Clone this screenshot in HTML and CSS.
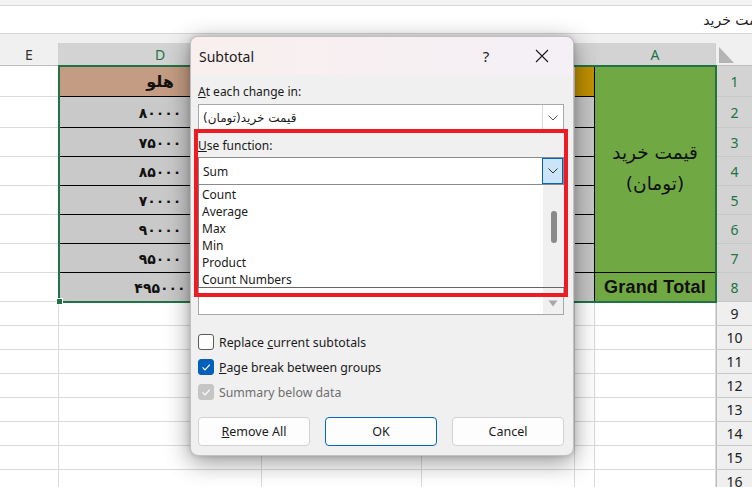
FILE: index.html
```html
<!DOCTYPE html>
<html>
<head>
<meta charset="utf-8">
<link rel="stylesheet" href="styles.css">
</head>
<body>
<div class="app">
  <div class="topstrip"></div>
  <div class="fbar"><span class="ftext">قیمت خرید</span></div>
  <div class="gap"></div>
  <div class="sheet">
    <div class="ch">E</div><div class="ch sel">D</div><div class="ch">C</div><div class="ch">B</div><div class="ch sel"></div><div class="ch sel">A</div>
    <div class="corner"><svg width="36" height="23" viewBox="0 0 36 23"><polygon points="3,4 3,20 18,20" fill="#b4b4b4"/></svg></div>

    <div class="c"></div><div class="c d head">هلو</div><div class="c"></div><div class="c"></div><div class="c b2 gold"></div>
    <div class="c amerge"><span>قیمت خرید</span><span>(تومان)</span></div><div class="rh sel">1</div>

    <div class="c"></div><div class="c d">۸۰۰۰۰</div><div class="c"></div><div class="c"></div><div class="c b2"></div><div class="rh sel">2</div>
    <div class="c"></div><div class="c d">۷۵۰۰۰</div><div class="c"></div><div class="c"></div><div class="c b2"></div><div class="rh sel">3</div>
    <div class="c"></div><div class="c d">۸۵۰۰۰</div><div class="c"></div><div class="c"></div><div class="c b2"></div><div class="rh sel">4</div>
    <div class="c"></div><div class="c d">۷۰۰۰۰</div><div class="c"></div><div class="c"></div><div class="c b2"></div><div class="rh sel">5</div>
    <div class="c"></div><div class="c d">۹۰۰۰۰</div><div class="c"></div><div class="c"></div><div class="c b2"></div><div class="rh sel">6</div>
    <div class="c"></div><div class="c d">۹۵۰۰۰</div><div class="c"></div><div class="c"></div><div class="c b2"></div><div class="rh sel">7</div>
    <div class="c"></div><div class="c d">۴۹۵۰۰۰</div><div class="c"></div><div class="c"></div><div class="c b2"></div><div class="c agt">Grand Total</div><div class="rh sel">8</div>

    <div class="c"></div><div class="c"></div><div class="c"></div><div class="c"></div><div class="c"></div><div class="c"></div><div class="rh">9</div>
    <div class="c"></div><div class="c"></div><div class="c"></div><div class="c"></div><div class="c"></div><div class="c"></div><div class="rh">10</div>
    <div class="c"></div><div class="c"></div><div class="c"></div><div class="c"></div><div class="c"></div><div class="c"></div><div class="rh">11</div>
    <div class="c"></div><div class="c"></div><div class="c"></div><div class="c"></div><div class="c"></div><div class="c"></div><div class="rh">12</div>
    <div class="c"></div><div class="c"></div><div class="c"></div><div class="c"></div><div class="c"></div><div class="c"></div><div class="rh">13</div>
    <div class="c"></div><div class="c"></div><div class="c"></div><div class="c"></div><div class="c"></div><div class="c"></div><div class="rh">14</div>
    <div class="c"></div><div class="c"></div><div class="c"></div><div class="c"></div><div class="c"></div><div class="c"></div><div class="rh">15</div>
    <div class="c"></div><div class="c"></div><div class="c"></div><div class="c"></div><div class="c"></div><div class="c"></div><div class="rh">16</div>
  </div>

  <div class="selection"></div>
  <div class="handle"></div>

  <div class="dialog">
    <div class="titlebar">
      <span class="title">Subtotal</span>
      <span class="tbtn help">?</span>
      <span class="tbtn close"><svg width="14" height="14" viewBox="0 0 14 14"><path d="M1 1 L13 13 M13 1 L1 13" stroke="#1a1a1a" stroke-width="1.1" fill="none"/></svg></span>
    </div>
    <div class="dbody">
      <div class="lbl l1"><u>A</u>t each change in:</div>
      <div class="combo c1"><span class="ctext"><span class="fa" dir="rtl">قیمت خرید(تومان)</span></span><span class="cbtn"><svg width="10" height="6" viewBox="0 0 10 6"><polyline points="0.5,0.5 5,5 9.5,0.5" fill="none" stroke="#555" stroke-width="1"/></svg></span></div>
      <div class="lbl l2"><u>U</u>se function:</div>
      <div class="combo c2"><span class="ctext">Sum</span><span class="cbtn active"><svg width="10" height="6" viewBox="0 0 10 6"><polyline points="0.5,0.5 5,5 9.5,0.5" fill="none" stroke="#333" stroke-width="1"/></svg></span></div>
      <div class="lbl l3"></div>
      <div class="list3"><div class="l3area"></div><div class="l3track"><svg width="10" height="7" viewBox="0 0 10 7"><polygon points="0.5,0.5 9.5,0.5 5,6.5" fill="#a8a8a8"/></svg></div></div>
      <div class="checks">
        <div class="chk"><span class="box"></span><span>Replace <u>c</u>urrent subtotals</span></div>
        <div class="chk"><span class="box on"><svg width="16" height="16" viewBox="0 0 16 16"><polyline points="4.5,8.3 7,10.8 11.8,5.6" fill="none" stroke="#fff" stroke-width="1.2"/></svg></span><span><u>P</u>age break between groups</span></div>
        <div class="chk dis"><span class="box off"><svg width="16" height="16" viewBox="0 0 16 16"><polyline points="4.5,8.3 7,10.8 11.8,5.6" fill="none" stroke="#fff" stroke-width="1.2"/></svg></span><span>Summary below data</span></div>
      </div>
      <div class="buttons">
        <span class="btn"><u>R</u>emove All</span>
        <span class="btn ok">OK</span>
        <span class="btn">Cancel</span>
      </div>
    </div>
    <div class="dropdown">
      <div class="items">
        <div>Count</div>
        <div>Average</div>
        <div>Max</div>
        <div>Min</div>
        <div>Product</div>
        <div>Count Numbers</div>
      </div>
      <div class="track"><div class="thumb"></div></div>
    </div>
  </div>
  <div class="redbox"></div>
</div>
</body>
</html>
```

FILE: styles.css
```css
* { box-sizing: border-box; }
html, body { margin: 0; padding: 0; }
body { width: 752px; height: 487px; overflow: hidden; background: #fff; font-family: "Noto Sans", sans-serif; }
.app { position: relative; width: 752px; height: 487px; overflow: hidden; }

.topstrip { height: 6px; background: #f3f3f3; border-bottom: 1px solid #d6d6d6; }
.fbar { height: 28px; background: #fff; border-bottom: 1px solid #d6d6d6; display: flex; justify-content: flex-end; align-items: center; overflow: hidden; }
.ftext { font-family: "DejaVu Sans", sans-serif; font-size: 14px; direction: rtl; white-space: nowrap; margin-right: -16px; color: #222; }
.gap { height: 9px; background: #f0f0f0; }

.sheet {
  display: grid;
  grid-template-columns: 59px 203px 160px 153px 20px 121px 36px;
  grid-template-rows: 23px 31px 31px repeat(6, 29px) repeat(8, 24px);
}
.ch { background: #f0f0f0; border-right: 1px solid #d0d0d0; border-bottom: 1px solid #bdbdbd; font-size: 14px; color: #333; display: flex; align-items: center; justify-content: center; }
.ch.sel { background: #d3d3d3; color: #217346; }
.corner { background: #f0f0f0; border-bottom: 1px solid #bdbdbd; }
.corner svg { display: block; }

.c { border-right: 1px solid #dadada; border-bottom: 1px solid #dadada; }
.d { background: #c9c9c9; border-bottom: 1px solid #000; font-family: "DejaVu Sans", sans-serif; font-weight: bold; font-size: 14px; color: #111; display: flex; align-items: center; justify-content: center; padding-top: 2px; }
.d.head { background: #c49c83; font-size: 16px; padding-top: 0; }
.b2 { background: #c6c6c6; border-bottom: 1px solid #000; border-right: 1px solid #000; }
.b2.gold { background: #bf9000; }
.amerge { grid-row: span 7; background: #70a843; border-bottom: 1px solid #000; direction: rtl; display: flex; flex-direction: column; align-items: center; justify-content: center; font-family: "DejaVu Sans", sans-serif; font-size: 18.5px; line-height: 31px; color: #111; padding-bottom: 2px; }
.agt { background: #70a843; font-family: "Liberation Sans", sans-serif; font-weight: bold; font-size: 18px; letter-spacing: 0.2px; color: #111; display: flex; align-items: center; justify-content: center; }
.rh { background: #efefef; border-bottom: 1px solid #c8c8c8; border-left: 1px solid #bdbdbd; font-size: 14px; color: #222; display: flex; align-items: center; justify-content: center; }
.rh.sel { background: #d3d3d3; color: #217346; }

.selection { position: absolute; left: 58px; top: 65px; width: 659px; height: 238px; border: 2px solid #217346; }
.handle { position: absolute; left: 56px; top: 298px; width: 7px; height: 7px; background: #217346; border: 1px solid #fff; }

.dialog {
  position: absolute; left: 190px; top: 36px; width: 384px; height: 420px;
  background: #f0f0f0; border: 1px solid rgba(0,0,0,0.2); border-radius: 8px;
  box-shadow: 0 6px 24px rgba(0,0,0,0.42), 0 0 5px rgba(0,0,0,0.15);
  overflow: hidden; color: #1a1a1a;
}
.titlebar { height: 38px; background: linear-gradient(to right, #f9efee, #f4f0f6); display: flex; align-items: center; padding-left: 8px; }
.title { flex: 1; font-size: 14px; color: #1b1b1b; }
.tbtn { width: 46px; display: flex; justify-content: center; align-items: center; }
.help { font-size: 15px; color: #222; margin-right: 10px; }
.close { margin-right: 8px; }
.close svg { display: block; }

.dbody { padding: 0 9px 0 7px; display: flex; flex-direction: column; font-size: 12px; }
.lbl { height: 16px; line-height: 16px; }
.l1 { margin-top: 9px; }
.l2 { margin-top: 7px; }
.l3 { margin-top: 5px; }
.combo { display: flex; background: #fff; border: 1px solid #a8a8a8; }
.c1 { margin-top: 4px; height: 27px; }
.c2 { margin-top: 3px; height: 28px; border-color: #8a8a8a; }
.ctext { flex: 1; display: flex; align-items: center; padding-left: 4px; }
.fa { font-family: "DejaVu Sans", sans-serif; font-size: 12px; }
.cbtn { width: 21px; border-left: 1px solid #d8d8d8; display: flex; align-items: center; justify-content: center; }
.cbtn svg { display: block; }
.cbtn.active { background: #cce4f7; border: 1px solid #0067c0; }

.list3 { margin-top: 2px; height: 107px; background: #fff; border: 1px solid #a8a8a8; display: flex; }
.l3area { flex: 1; }
.l3track { width: 20px; background: #f0f0f0; display: flex; align-items: flex-end; justify-content: center; padding-bottom: 7px; }
.l3track svg { display: block; }

.checks { margin-top: 19px; display: flex; flex-direction: column; gap: 9px; }
.chk { height: 16px; display: flex; align-items: center; gap: 5px; font-size: 12.3px; }
.box { width: 16px; height: 16px; border: 1px solid #5a5a5a; border-radius: 3px; background: #fdfdfd; }
.box svg { display: block; margin: -1px; }
.box.on { background: #005fb8; border-color: #005fb8; }
.box.off { background: #c5c5c5; border-color: #c5c5c5; }
.chk.dis { color: #6e6e6e; }

.buttons { margin-top: 17px; display: flex; justify-content: space-between; }
.btn { width: 112px; height: 29px; background: #fdfdfd; border: 1px solid #d2d2d2; border-radius: 4px; display: flex; align-items: center; justify-content: center; font-size: 12.5px; color: #1a1a1a; }
.btn.ok { border-color: #0067c0; }

.dropdown { position: absolute; left: 7px; top: 148px; width: 366px; height: 103px; background: #fff; border-left: 1px solid #7a7a7a; border-bottom: 1px solid #666; display: flex; }
.items { flex: 1; padding-top: 1px; padding-left: 3px; font-size: 12px; }
.items div { height: 17px; line-height: 17px; }
.track { width: 21px; background: #f0f0f0; position: relative; }
.thumb { position: absolute; left: 8px; top: 26px; width: 6px; height: 32px; background: #8a8a8a; border-radius: 3px; }

.redbox { position: absolute; left: 194px; top: 129px; width: 374px; height: 168px; border: 4px solid #ed1c24; }
```
